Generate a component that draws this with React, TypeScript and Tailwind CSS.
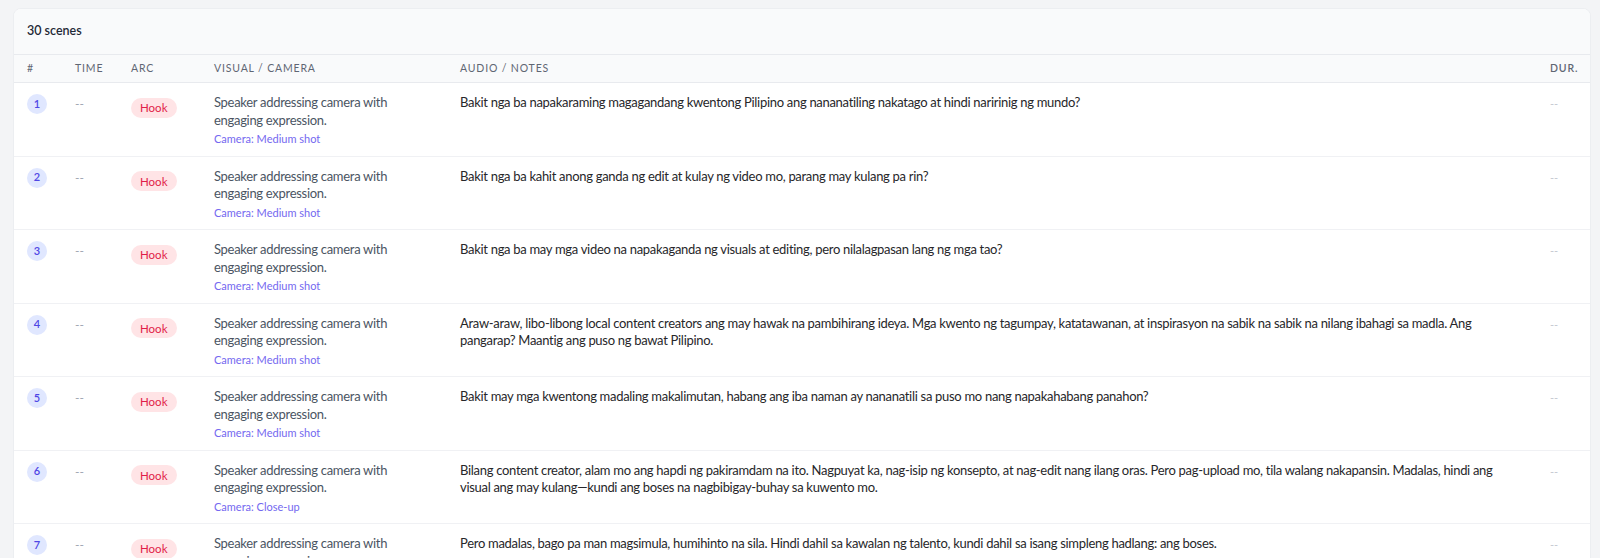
import React from "react";

type Scene = { n: number; visual: string; camera: string; audio: string };

const VIS = "Speaker addressing camera with engaging expression.";

const scenes: Scene[] = [
  { n: 1, visual: VIS, camera: "Camera: Medium shot", audio: "Bakit nga ba napakaraming magagandang kwentong Pilipino ang nananatiling nakatago at hindi naririnig ng mundo?" },
  { n: 2, visual: VIS, camera: "Camera: Medium shot", audio: "Bakit nga ba kahit anong ganda ng edit at kulay ng video mo, parang may kulang pa rin?" },
  { n: 3, visual: VIS, camera: "Camera: Medium shot", audio: "Bakit nga ba may mga video na napakaganda ng visuals at editing, pero nilalagpasan lang ng mga tao?" },
  { n: 4, visual: VIS, camera: "Camera: Medium shot", audio: "Araw-araw, libo-libong local content creators ang may hawak na pambihirang ideya. Mga kwento ng tagumpay, katatawanan, at inspirasyon na sabik na sabik na nilang ibahagi sa madla. Ang pangarap? Maantig ang puso ng bawat Pilipino." },
  { n: 5, visual: VIS, camera: "Camera: Medium shot", audio: "Bakit may mga kwentong madaling makalimutan, habang ang iba naman ay nananatili sa puso mo nang napakahabang panahon?" },
  { n: 6, visual: VIS, camera: "Camera: Close-up", audio: "Bilang content creator, alam mo ang hapdi ng pakiramdam na ito. Nagpuyat ka, nag-isip ng konsepto, at nag-edit nang ilang oras. Pero pag-upload mo, tila walang nakapansin. Madalas, hindi ang visual ang may kulang\u2014kundi ang boses na nagbibigay-buhay sa kuwento mo." },
  { n: 7, visual: VIS, camera: "Camera: Medium shot", audio: "Pero madalas, bago pa man magsimula, humihinto na sila. Hindi dahil sa kawalan ng talento, kundi dahil sa isang simpleng hadlang: ang boses." },
];

const grid = "grid grid-cols-[48px_56px_83px_246px_1fr_53px]";

export default function App() {
  return (
    <div
      className="min-h-[558px] bg-[#f3f4f6] pl-[13px] pr-[9px] pt-2"
      style={{ fontFamily: "Lato, 'Noto Sans', sans-serif" }}
    >
      <div className="overflow-hidden rounded-t-lg border border-[#eceef1] bg-white">
        <div className="flex h-[46px] items-center border-b border-[#e8eaee] bg-[#f9fafb] px-[13px] text-[12.5px] font-semibold text-[#1f2937]">
          30 scenes
        </div>
        <div className={`${grid} h-[28px] items-center border-b border-[#e8eaee] bg-[#f9fafb] text-[10.5px] uppercase tracking-[0.08em] text-[#5f6673]`}>
          <div className="px-[13px]">#</div>
          <div className="px-[13px]">Time</div>
          <div className="px-[13px]">Arc</div>
          <div className="px-[13px]">Visual / Camera</div>
          <div className="px-[13px]">Audio / Notes</div>
          <div className="px-[13px] font-semibold">Dur.</div>
        </div>
        {scenes.map((s) => (
          <div key={s.n} className={`${grid} border-b border-[#f0f1f4] pb-[9.5px] pt-[11px]`}>
            <div className="px-[13px]">
              <div className="flex h-[20px] w-[20px] items-center justify-center rounded-full bg-[#e0e7ff] text-[11px] font-semibold text-[#4f46e5]">
                {s.n}
              </div>
            </div>
            <div className="px-[13px] pt-[1px] text-[12px] leading-[17px] text-[#9ca3af]">--</div>
            <div className="px-[13px]">
              <span className="inline-flex h-[20px] items-center rounded-full bg-[#ffe4e6] px-[9px] text-[11.5px] text-[#e11d48]">
                Hook
              </span>
            </div>
            <div className="px-[13px]">
              <div className="text-[13px] leading-[17.5px] tracking-[-0.3px] text-[#4b5563]">{s.visual}</div>
              <div className="mt-[3px] text-[11px] leading-[14px] text-[#7468f0]">{s.camera}</div>
            </div>
            <div className="px-[13px] text-[13px] leading-[17.5px] tracking-[-0.3px] text-[#27272a]">{s.audio}</div>
            <div className="px-[13px] pt-[1px] text-[11px] leading-[17px] text-[#c4c8cf]">--</div>
          </div>
        ))}
      </div>
    </div>
  );
}
